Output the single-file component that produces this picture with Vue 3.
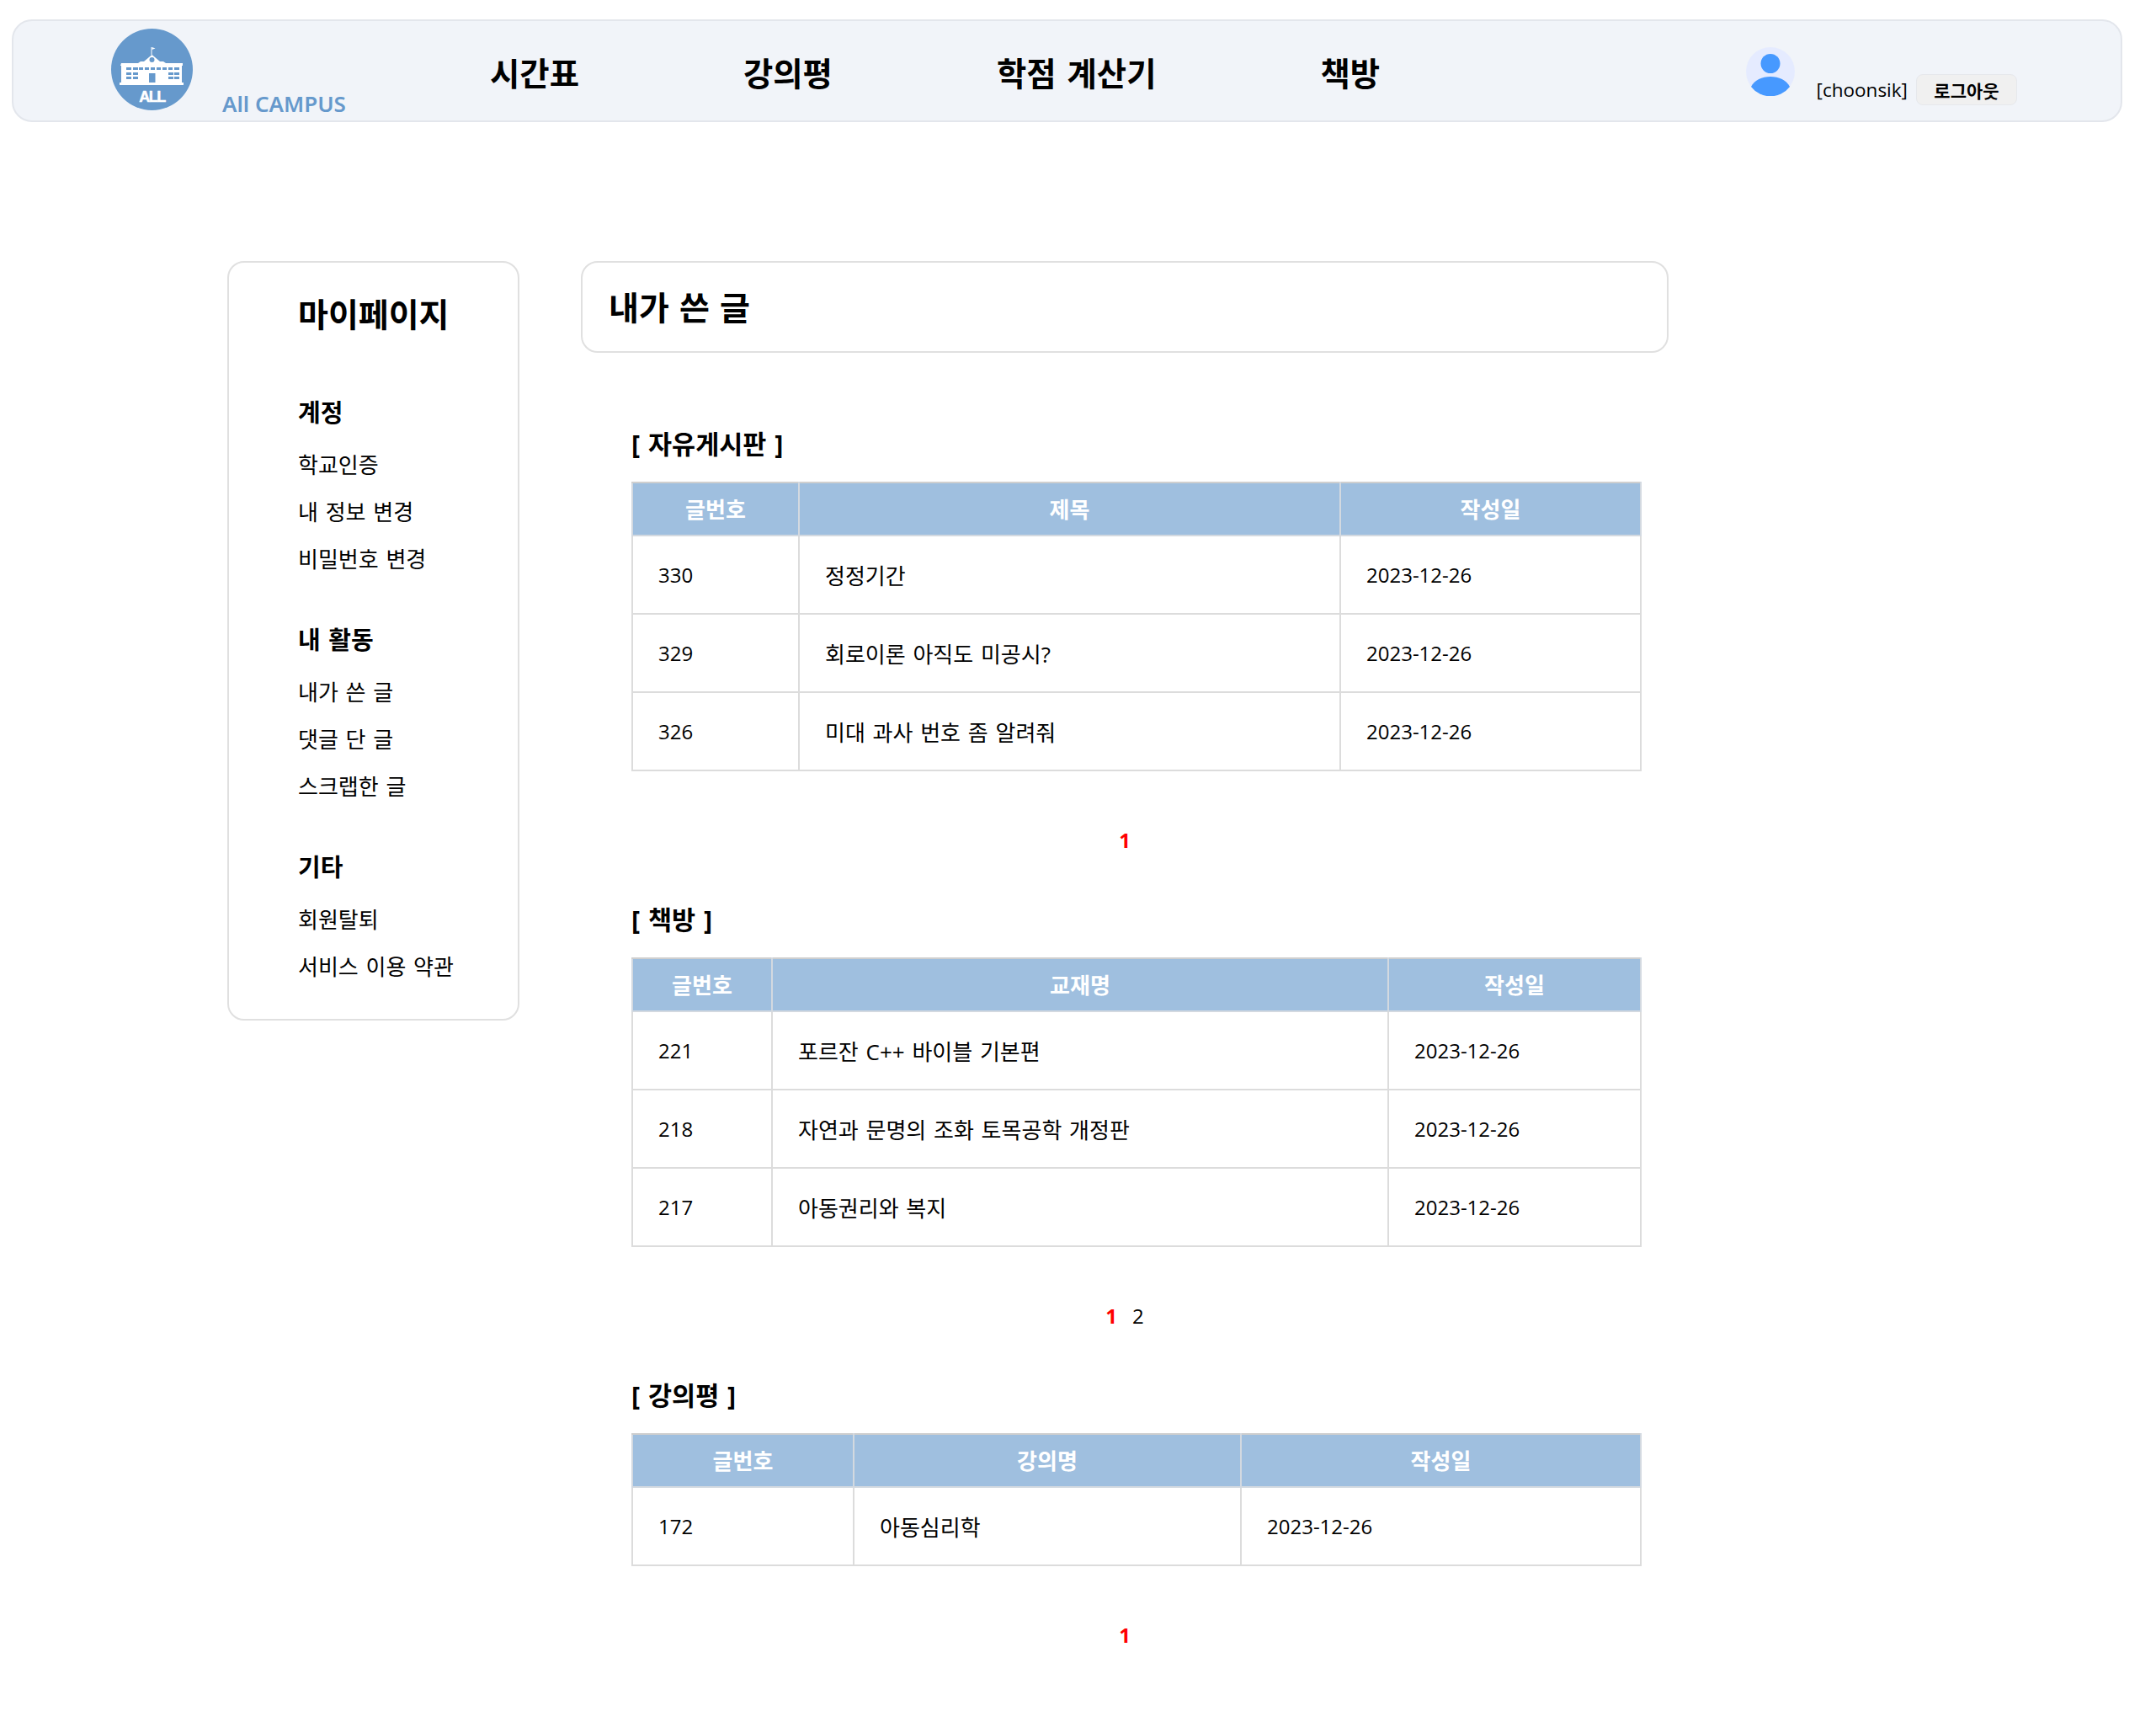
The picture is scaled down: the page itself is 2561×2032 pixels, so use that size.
<script setup>
const menu = ['시간표', '강의평', '학점 계산기', '책방'];

const sideGroups = [
  { title: '계정', items: ['학교인증', '내 정보 변경', '비밀번호 변경'] },
  { title: '내 활동', items: ['내가 쓴 글', '댓글 단 글', '스크랩한 글'] },
  { title: '기타', items: ['회원탈퇴', '서비스 이용 약관'] },
];

const boards = [
  {
    name: '[ 자유게시판 ]',
    label: '제목',
    widths: [198, 643, 357],
    pages: [1],
    rows: [
      [330, '정정기간', '2023-12-26'],
      [329, '회로이론 아직도 미공시?', '2023-12-26'],
      [326, '미대 과사 번호 좀 알려줘', '2023-12-26'],
    ],
  },
  {
    name: '[ 책방 ]',
    label: '교재명',
    widths: [166, 732, 300],
    pages: [1, 2],
    rows: [
      [221, '포르잔 C++ 바이블 기본편', '2023-12-26'],
      [218, '자연과 문명의 조화 토목공학 개정판', '2023-12-26'],
      [217, '아동권리와 복지', '2023-12-26'],
    ],
  },
  {
    name: '[ 강의평 ]',
    label: '강의명',
    widths: [263, 460, 475],
    pages: [1],
    rows: [[172, '아동심리학', '2023-12-26']],
  },
];
</script>

<template>
  <div class="page">
    <header class="nav">
      <div class="brand">
        <svg class="logo" viewBox="0 0 97 97">
          <circle cx="48.5" cy="48.5" r="48.5" fill="#6699cc" />
          <path d="M47.5 22h1v9h-1z" fill="#fff" />
          <path d="M48.5 22l4 1.5-4 1.5z" fill="#fff" />
          <path
            d="M12 41h20l3-2h4l9.500-8 9.500 8h4l3 2h20v3h-1v20h2v3H10v-3h2V44h-1z"
            fill="#fff"
          />
          <circle cx="48.500" cy="37" r="3" fill="#6699cc" />
          <g fill="#6699cc">
            <path d="M18 46h6v3h-6zM26 46h6v3h-6zM33 46h5v3h-5zM40 46h5v3h-5zM47 46h5v3h-5zM54 46h5v3h-5zM61 46h5v3h-5zM68 46h5v3h-5zM75 46h6v3h-6z" />
            <path d="M18 52h6v3h-6zM26 52h6v3h-6zM68 52h6v3h-6zM75 52h6v3h-6z" />
            <path d="M18 57h6v3h-6zM26 57h6v3h-6zM68 57h6v3h-6zM75 57h6v3h-6z" />
            <path d="M45 53h7.500v11H45z" />
          </g>
          <text x="48.500" y="87" class="logo-text" text-anchor="middle">ALL</text>
        </svg>
        <span class="brand-name">All CAMPUS</span>
      </div>
      <nav class="menu">
        <a v-for="item in menu" :key="item" class="menu-item">{{ item }}</a>
      </nav>
      <div class="user">
        <svg class="avatar" viewBox="0 0 58 58">
          <circle cx="29" cy="29" r="29" fill="#e5ebff" />
          <circle cx="29" cy="19.500" r="11.500" fill="#4799ff" />
          <path d="M6 47c4-8 13-12 23-12s19 4 23 12A29 29 0 0 1 6 47z" fill="#4799ff" />
        </svg>
        <span class="user-name">[choonsik]</span>
        <button class="logout">로그아웃</button>
      </div>
    </header>

    <div class="content">
      <aside class="side">
        <h2 class="side-title">마이페이지</h2>
        <section v-for="group in sideGroups" :key="group.title" class="side-group">
          <h3 class="side-head">{{ group.title }}</h3>
          <a v-for="item in group.items" :key="item" class="side-link">{{ item }}</a>
        </section>
      </aside>

      <main class="main">
        <div class="title-box">
          <h1 class="title">내가 쓴 글</h1>
        </div>
        <section v-for="board in boards" :key="board.name" class="board">
          <h4 class="board-name">{{ board.name }}</h4>
          <table class="table">
            <colgroup>
              <col v-for="w in board.widths" :key="w" :style="{ width: w + 'px' }" />
            </colgroup>
            <thead>
              <tr>
                <th>글번호</th>
                <th>{{ board.label }}</th>
                <th>작성일</th>
              </tr>
            </thead>
            <tbody>
              <tr v-for="row in board.rows" :key="row[0]">
                <td v-for="cell in row" :key="cell">{{ cell }}</td>
              </tr>
            </tbody>
          </table>
          <div class="pager">
            <span v-for="p in board.pages" :key="p" class="page-no" :class="{ on: p === 1 }">{{ p }}</span>
          </div>
        </section>
      </main>
    </div>
  </div>
</template>

<style>
body {
  background: #fff;
}
</style>

<style scoped>
.page {
  height: 2032px;
  overflow: hidden;
  padding-top: 23px;
  box-sizing: border-box;
  color: #000;
  font-family: "Open Sans", "Noto Sans CJK KR", sans-serif;
}

.nav {
  display: flex;
  align-items: flex-start;
  box-sizing: border-box;
  margin-left: 14px;
  width: 2507px;
  height: 122px;
  padding: 9px 0 0 116px;
  background: #f1f4f9;
  border: 2px solid #e3e6ec;
  border-radius: 24px;
}

.brand {
  display: flex;
  align-items: flex-end;
  gap: 34px;
  width: 450px;
}

.logo {
  width: 97px;
  height: 97px;
}

.logo-text {
  fill: #fff;
  stroke: #fff;
  stroke-width: 0.5px;
  font-family: "Liberation Sans", sans-serif;
  font-size: 18px;
  font-weight: 700;
  letter-spacing: -1.5px;
}

.brand-name {
  margin-bottom: -5px;
  margin-left: 1px;
  color: #6699cc;
  font-size: 26px;
  line-height: 26px;
  font-weight: 600;
  font-family: "Noto Sans", sans-serif;
}

.menu {
  display: flex;
  gap: 195px;
  margin-top: 28px;
}

.menu-item {
  font-size: 38.4px;
  line-height: 50px;
  font-weight: 700;
  word-spacing: 3px;
}

.user {
  display: flex;
  align-items: flex-end;
  margin-left: auto;
  margin-right: 123px;
  margin-top: 22px;
}

.avatar {
  width: 58px;
  height: 58px;
  margin-bottom: 11px;
}

.user-name {
  margin-left: 26px;
  font-size: 22.500px;
  line-height: 36px;
}

.logout {
  box-sizing: border-box;
  width: 120px;
  height: 37px;
  margin-left: 10px;
  padding: 0;
  background: #f0f0f0;
  border: 1px solid #e6e8ec;
  border-radius: 8px;
  color: #000;
  font-family: inherit;
  font-size: 21px;
  font-weight: 700;
}

.content {
  display: flex;
  align-items: flex-start;
  gap: 73px;
  margin: 165px 0 0 270px;
}

.side {
  box-sizing: border-box;
  width: 347px;
  height: 902px;
  padding: 36px 0 0 82px;
  border: 2px solid #e0e0e0;
  border-radius: 20px;
}

.side-title {
  margin: 0 0 72px;
  font-size: 39px;
  line-height: 50px;
  font-weight: 700;
}

.side-group {
  display: flex;
  flex-direction: column;
  margin-bottom: 48px;
}

.side-head {
  margin: 0 0 14px;
  font-size: 29px;
  line-height: 40px;
  font-weight: 700;
  word-spacing: 2px;
}

.side-link {
  font-size: 26px;
  line-height: 56px;
  word-spacing: 2px;
}

.main {
  width: 1292px;
}

.title-box {
  box-sizing: border-box;
  height: 109px;
  padding: 0 0 0 31px;
  border: 2px solid #e0e0e0;
  border-radius: 20px;
  display: flex;
  align-items: center;
}

.title {
  margin: 0;
  font-size: 39px;
  line-height: 50px;
  font-weight: 700;
  word-spacing: 2px;
}

.board {
  padding-left: 60px;
  margin-top: 88px;
}

.board + .board {
  margin-top: 0;
}

.board-name {
  margin: 0 0 25px;
  font-size: 30.500px;
  line-height: 40px;
  font-weight: 700;
  word-spacing: 2px;
}

.table {
  width: 1198px;
  table-layout: fixed;
  border-collapse: collapse;
}

.table th {
  box-sizing: border-box;
  height: 63px;
  padding: 0 0 2px;
  background: #9fbfdf;
  border: 2px solid #d3d9e0;
  border-top-color: #cfcfcf;
  color: #fff;
  font-size: 26px;
  font-weight: 700;
  text-align: center;
}

.table td {
  box-sizing: border-box;
  height: 93px;
  padding: 0 0 0 30px;
  border: 2px solid #dcdcdc;
  font-size: 24px;
}

.table td:nth-child(2) {
  font-size: 26px;
  word-spacing: 2px;
}

.pager {
  display: flex;
  justify-content: center;
  gap: 18px;
  height: 156px;
  margin-left: -60px;
  padding-top: 67px;
  box-sizing: border-box;
  font-size: 24px;
  line-height: 30px;
}

.page-no.on {
  color: #f00;
  font-weight: 700;
}
</style>
